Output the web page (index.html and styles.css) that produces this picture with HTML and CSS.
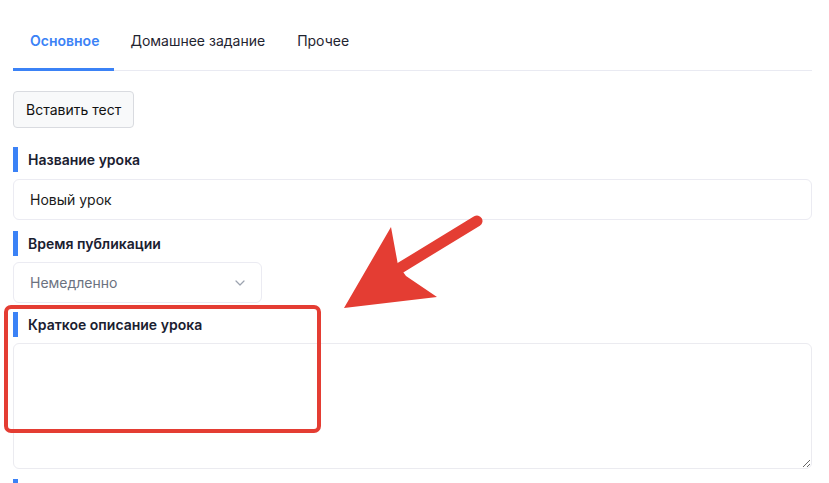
FILE: index.html
```html
<!DOCTYPE html>
<html lang="ru">
<head>
<meta charset="utf-8">
<link rel="stylesheet" href="styles.css">
</head>
<body>
<div class="page">
  <nav class="tabs">
    <div class="tab active">Основное</div>
    <div class="tab">Домашнее задание</div>
    <div class="tab">Прочее</div>
  </nav>
  <button class="btn">Вставить тест</button>
  <div class="field f1">
    <div class="label">Название урока</div>
    <div class="input">Новый урок</div>
  </div>
  <div class="field f2">
    <div class="label">Время публикации</div>
    <div class="select"><span>Немедленно</span>
      <svg width="10" height="6" viewBox="0 0 10 6"><path d="M1 1l4 4 4-4" fill="none" stroke="#9ca3af" stroke-width="1.2" stroke-linecap="round" stroke-linejoin="round"/></svg>
    </div>
  </div>
  <div class="field f3">
    <div class="label">Краткое описание урока</div>
    <textarea class="textarea"></textarea>
  </div>
  <div class="label next"></div>

  <div class="highlight"></div>
  <svg class="arrow" width="829" height="483" viewBox="0 0 829 483">
    <line x1="477" y1="221" x2="400" y2="268" stroke="#e43d33" stroke-width="11" stroke-linecap="round"/>
    <polygon points="344,308 391,227 398,265 406,276 437,297" fill="#e43d33"/>
  </svg>
</div>
</body>
</html>
```
FILE: styles.css
```css
* { box-sizing: border-box; }
html, body { margin: 0; padding: 0; background: #fff; }
body {
  font-family: Inter, "Noto Sans", "Liberation Sans", sans-serif;
  font-size: 14px;
  color: #1f2430;
  width: 829px;
  height: 483px;
  overflow: hidden;
}
.page {
  position: relative;
  padding: 0 17px 0 13px;
  height: 483px;
}
.tabs {
  display: flex;
  border-bottom: 1px solid #e9eaf2;
  height: 71px;
}
.tab {
  padding: 31px 16px 16px 16px;
  line-height: 20px;
  border-bottom: 3px solid transparent;
  margin-bottom: -1px;
  color: #1f2430;
}
.tab.active {
  color: #3b82f6;
  font-weight: 600;
  border-bottom-color: #3b82f6;
  padding-left: 17px;
  padding-right: 15px;
}
.btn {
  display: block;
  margin-top: 20px;
  height: 37px;
  padding: 0 12px;
  font-family: inherit;
  font-size: 14px;
  color: #111;
  background: #f8f9fa;
  border: 1px solid #d9dbe0;
  border-radius: 4px;
}
.field { display: flex; flex-direction: column; }
.label {
  height: 25px;
  line-height: 25px;
  border-left: 5px solid #3b82f6;
  padding-left: 10px;
  font-weight: 600;
  color: #1a2030;
}
.f1 { margin-top: 19px; }
.f1 .label { margin-bottom: 7px; }
.input {
  height: 41px;
  border: 1px solid #ebebf2;
  border-radius: 6px;
  padding: 0 16px;
  display: flex;
  align-items: center;
  color: #1a1a1a;
}
.f2 { margin-top: 11px; }
.f2 .label { margin-bottom: 6px; }
.select {
  width: 249px;
  height: 41px;
  border: 1px solid #ebebf2;
  border-radius: 6px;
  padding: 0 16px 0 16px;
  display: flex;
  align-items: center;
  justify-content: space-between;
  color: #6b7280;
}
.f3 { margin-top: 9px; }
.f3 .label { margin-bottom: 6px; }
.textarea {
  display: block;
  width: 799px;
  height: 126px;
  border: 1px solid #ebebf0;
  border-radius: 6px;
  resize: vertical;
  margin: 0;
  font-family: inherit;
}
.label.next { margin-top: 10px; }
.highlight {
  position: absolute;
  left: 4px;
  top: 305px;
  width: 317px;
  height: 128px;
  border: 4px solid #e43d33;
  border-radius: 7px;
}
.arrow {
  position: absolute;
  left: 0;
  top: 0;
}
```
